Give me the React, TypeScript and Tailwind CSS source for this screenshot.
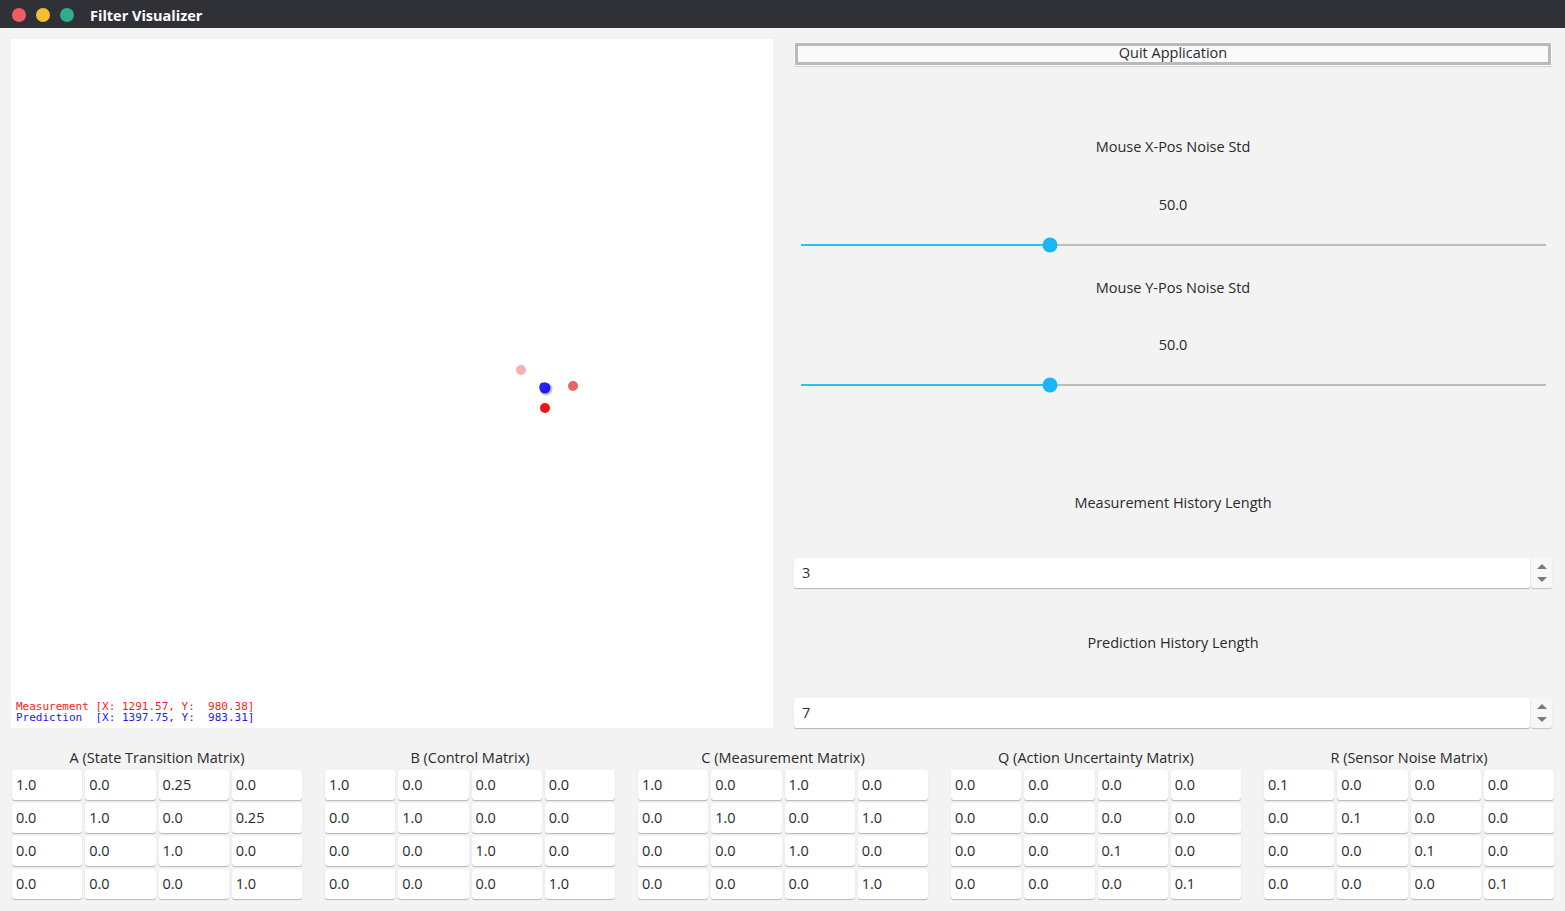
import React from "react";

const matrices = [
  {
    title: "A (State Transition Matrix)",
    rows: [
      ["1.0", "0.0", "0.25", "0.0"],
      ["0.0", "1.0", "0.0", "0.25"],
      ["0.0", "0.0", "1.0", "0.0"],
      ["0.0", "0.0", "0.0", "1.0"],
    ],
  },
  {
    title: "B (Control Matrix)",
    rows: [
      ["1.0", "0.0", "0.0", "0.0"],
      ["0.0", "1.0", "0.0", "0.0"],
      ["0.0", "0.0", "1.0", "0.0"],
      ["0.0", "0.0", "0.0", "1.0"],
    ],
  },
  {
    title: "C (Measurement Matrix)",
    rows: [
      ["1.0", "0.0", "1.0", "0.0"],
      ["0.0", "1.0", "0.0", "1.0"],
      ["0.0", "0.0", "1.0", "0.0"],
      ["0.0", "0.0", "0.0", "1.0"],
    ],
  },
  {
    title: "Q (Action Uncertainty Matrix)",
    rows: [
      ["0.0", "0.0", "0.0", "0.0"],
      ["0.0", "0.0", "0.0", "0.0"],
      ["0.0", "0.0", "0.1", "0.0"],
      ["0.0", "0.0", "0.0", "0.1"],
    ],
  },
  {
    title: "R (Sensor Noise Matrix)",
    rows: [
      ["0.1", "0.0", "0.0", "0.0"],
      ["0.0", "0.1", "0.0", "0.0"],
      ["0.0", "0.0", "0.1", "0.0"],
      ["0.0", "0.0", "0.0", "0.1"],
    ],
  },
];

const font = "font-['Open_Sans','Noto_Sans',sans-serif]";

const Slider = ({ value }: { value: number }) => (
  <div className="relative h-[40px] px-[7px] pr-[6px] flex items-center">
    <div className="relative w-full h-[2px] bg-[#bdbdbd]">
      <div className="absolute left-0 top-0 h-[2px] bg-[#2ebff6]" style={{ width: `${value * 100}%` }} />
      <div
        className="absolute top-1/2 w-[15px] h-[15px] -translate-x-1/2 -translate-y-1/2 rounded-full bg-[#1ab5fb]"
        style={{ left: `${value * 100}%` }}
      />
    </div>
  </div>
);

const SpinBox = ({ value }: { value: string }) => (
  <div className="flex h-[30px]">
    <div className="flex-1 flex items-center bg-white rounded-[2px] shadow-[0_1px_1px_rgba(0,0,0,0.25)] px-[8px] text-[14.5px] text-[#2e2e2e]">
      {value}
    </div>
    <div className="w-[21px] ml-[1px] flex flex-col items-center justify-center gap-[8px] bg-[#f7f7f7] rounded-[2px] shadow-[0_1px_1px_rgba(0,0,0,0.2)]">
      <div className="w-0 h-0 border-x-[5px] border-x-transparent border-b-[5px] border-b-[#7a7a7a]" />
      <div className="w-0 h-0 border-x-[5px] border-x-transparent border-t-[5px] border-t-[#7a7a7a]" />
    </div>
  </div>
);

const Label = ({ children }: { children: React.ReactNode }) => (
  <div className="h-[40px] pt-[2px] flex items-center justify-center text-[14.5px] text-[#2a2a2a]">{children}</div>
);

export default function App() {
  return (
    <div className={`w-[1565px] h-[911px] flex flex-col bg-[#f3f3f3] overflow-hidden ${font}`}>
      {/* title bar */}
      <div className="h-[28px] bg-[#303136] flex items-center pl-[12px]">
        <div className="flex gap-[10px] mt-[1px]">
          <span className="w-[14px] h-[14px] rounded-full bg-[#ef5d63]" />
          <span className="w-[14px] h-[14px] rounded-full bg-[#f4be33]" />
          <span className="w-[14px] h-[14px] rounded-full bg-[#2eae8c]" />
        </div>
        <span className="ml-[16px] mt-[3px] text-white font-bold text-[14.5px]">Filter Visualizer</span>
      </div>

      <div className="flex pt-[11px] pl-[11px] pr-[13px] gap-[21px]">
        {/* canvas */}
        <div className="relative w-[762px] h-[689px] bg-white">
          <svg className="absolute inset-0" width="762" height="689">
            <circle cx="510" cy="331" r="5" fill="#f4b2b2" />
            <circle cx="562" cy="347" r="5" fill="#e96464" />
            <circle cx="534" cy="369" r="5" fill="#ee1414" />
            <circle cx="535" cy="350" r="6.5" fill="#c4c4dc" />
            <circle cx="534" cy="349" r="5.5" fill="#1a1aee" />
            <circle cx="532.5" cy="347.5" r="4" fill="#2222ff" />
          </svg>
          <div className="absolute left-[5px] bottom-[5px] font-['DejaVu_Sans_Mono',monospace] text-[11px] leading-[11px] whitespace-pre">
            <div className="text-[#ff1a1a]">Measurement [X: 1291.57, Y:  980.38]</div>
            <div className="text-[#1a1aff]">Prediction  [X: 1397.75, Y:  983.31]</div>
          </div>
        </div>

        {/* controls */}
        <div className="flex-1 flex flex-col">
          <div className="mt-[3px] h-[24px] rounded-[2px] bg-white/70 shadow-[0_1px_1px_rgba(0,0,0,0.15)] p-[1px]">
            <div className="h-full border-[3px] border-[#bababa] bg-[#fafafa] flex items-center justify-center pb-[3px] text-[14.5px] text-[#2a2a2a]">
              Quit Application
            </div>
          </div>

          <div className="mt-[60px]">
            <Label>Mouse X-Pos Noise Std</Label>
          </div>
          <div className="mt-[18px]">
            <Label>50.0</Label>
          </div>
          <div className="mt-[1px]">
            <Slider value={0.334} />
          </div>
          <div className="mt-[2px]">
            <Label>Mouse Y-Pos Noise Std</Label>
          </div>
          <div className="mt-[17px]">
            <Label>50.0</Label>
          </div>
          <div className="mt-[1px]">
            <Slider value={0.334} />
          </div>

          <div className="mt-[77px]">
            <Label>Measurement History Length</Label>
          </div>
          <div className="mt-[36px]">
            <SpinBox value="3" />
          </div>
          <div className="mt-[34px]">
            <Label>Prediction History Length</Label>
          </div>
          <div className="mt-[36px]">
            <SpinBox value="7" />
          </div>
        </div>
      </div>

      {/* matrices */}
      <div className="flex pl-[12px] gap-[23px] mt-[19px]">
        {matrices.map((m) => (
          <div key={m.title} className="w-[290px] flex flex-col">
            <div className="h-[22px] flex items-center justify-center text-[14.5px] text-[#2a2a2a]">{m.title}</div>
            <div className="grid grid-cols-4 gap-[3px] mt-[1px]">
              {m.rows.flat().map((v, i) => (
                <div
                  key={i}
                  className="h-[30px] bg-white rounded-[3px] shadow-[0_1px_1px_rgba(0,0,0,0.25)] flex items-center pl-[4px] text-[14.5px] text-[#2a2a2a]"
                >
                  {v}
                </div>
              ))}
            </div>
          </div>
        ))}
      </div>
    </div>
  );
}
